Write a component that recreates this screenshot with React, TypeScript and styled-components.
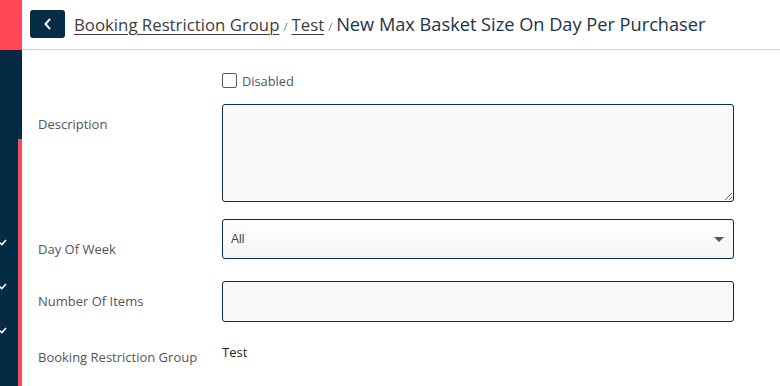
import styled, { createGlobalStyle } from 'styled-components'

const GlobalStyle = createGlobalStyle`
  html, body {
    margin: 0;
    padding: 0;
    background: #fff;
    font-family: 'Open Sans', 'Noto Sans', sans-serif;
  }
  * { box-sizing: border-box; }
`

const Shell = styled.div`
  display: flex;
  height: 386px;
  width: 780px;
  overflow: hidden;
`

const Sidebar = styled.aside`
  width: 22px;
  flex-shrink: 0;
  display: flex;
  flex-direction: column;
  background: #052a44;
`

const SideTop = styled.div`
  height: 50px;
  background: #ff4757;
`

const SideGap = styled.div`
  height: 89px;
`

const SideNav = styled.nav`
  flex: 1;
  border-right: 4px solid #ff4757;
  display: flex;
  flex-direction: column;
  padding-top: 97px;
  gap: 33px;
`

const Tick = styled.svg`
  width: 8px;
  height: 11px;
  margin-left: -1px;
`

const Main = styled.main`
  flex: 1;
  display: flex;
  flex-direction: column;
`

const Header = styled.header`
  height: 50px;
  border-bottom: 1px solid #cfcfcf;
  display: flex;
  align-items: center;
  padding: 0 0 2px 8px;
  gap: 9px;
`

const BackButton = styled.button`
  width: 35px;
  height: 28px;
  border: none;
  border-radius: 3px;
  background: #062b45;
  display: flex;
  align-items: center;
  justify-content: center;
  padding: 0;
`

const Crumbs = styled.div`
  font-size: 16.8px;
  color: #1e3347;
  display: flex;
  align-items: baseline;
  white-space: nowrap;
`

const CrumbLink = styled.a`
  color: #3d3d3d;
  text-decoration: underline;
  text-underline-offset: 3px;
  text-decoration-thickness: 1px;
`

const CrumbCurrent = styled.span`
  font-size: 18.2px;
  color: #1e3347;
`

const Sep = styled.span`
  font-size: 11px;
  color: #777;
  margin: 0 4px;
`

const Form = styled.div`
  padding: 22px 0 0 16px;
  display: flex;
  flex-direction: column;
`

const Row = styled.div<{ $gap: number }>`
  display: grid;
  grid-template-columns: 184px 512px;
  align-items: start;
  margin-bottom: ${p => p.$gap}px;
`

const Label = styled.label<{ $top: number }>`
  font-size: 13px;
  color: #555;
  padding-top: ${p => p.$top}px;
  line-height: 18px;
`

const CheckWrap = styled.label`
  display: flex;
  align-items: center;
  gap: 5px;
  font-size: 12.8px;
  color: #555;
  line-height: 18px;
`

const CheckBox = styled.span`
  width: 15px;
  height: 15px;
  border: 1px solid #5a5a5a;
  border-radius: 2px;
  background: #fff;
  margin-top: -2px;
`

const TextArea = styled.textarea`
  width: 512px;
  height: 98px;
  border: 1px solid #0b2d45;
  border-radius: 3px;
  background: #f9f9f9;
  resize: vertical;
  font: inherit;
  display: block;
`

const Select = styled.div`
  width: 512px;
  height: 40px;
  border: 1px solid #0b2d45;
  border-radius: 3px;
  background: linear-gradient(#ffffff, #f4f4f4);
  display: flex;
  align-items: center;
  justify-content: space-between;
  padding: 0 9px 0 8px;
  font-family: 'Liberation Sans', Arial, sans-serif;
  font-size: 12px;
  color: #444;
`

const Caret = styled.span`
  width: 0;
  height: 0;
  border-left: 5px solid transparent;
  border-right: 5px solid transparent;
  border-top: 5px solid #555;
`

const Input = styled.input`
  width: 512px;
  height: 41px;
  border: 1px solid #0b2d45;
  border-radius: 3px;
  background: #f9f9f9;
  display: block;
`

const Value = styled.div`
  font-size: 13px;
  color: #222;
  padding-top: 9px;
  line-height: 18px;
`

const TickIcon = () => (
  <Tick viewBox="0 0 8 11">
    <path d="M0.5 6.5 L2.8 8.6 L7 4" stroke="#fff" strokeWidth="1.6" fill="none" />
  </Tick>
)

export default function App() {
  return (
    <>
      <GlobalStyle />
      <Shell>
        <Sidebar>
          <SideTop />
          <SideGap />
          <SideNav>
            <TickIcon />
            <TickIcon />
            <TickIcon />
          </SideNav>
        </Sidebar>
        <Main>
          <Header>
            <BackButton aria-label="Back">
              <svg width="10" height="14" viewBox="0 0 10 14">
                <path d="M7 2 L2.5 7 L7 12" stroke="#fff" strokeWidth="2" fill="none" />
              </svg>
            </BackButton>
            <Crumbs>
              <CrumbLink>Booking Restriction Group</CrumbLink>
              <Sep>/</Sep>
              <CrumbLink>Test</CrumbLink>
              <Sep>/</Sep>
              <CrumbCurrent>New Max Basket Size On Day Per Purchaser</CrumbCurrent>
            </Crumbs>
          </Header>
          <Form>
            <Row $gap={14}>
              <span />
              <CheckWrap>
                <CheckBox />
                Disabled
              </CheckWrap>
            </Row>
            <Row $gap={17}>
              <Label $top={11}>Description</Label>
              <TextArea />
            </Row>
            <Row $gap={22}>
              <Label $top={21}>Day Of Week</Label>
              <Select>
                <span>All</span>
                <Caret />
              </Select>
            </Row>
            <Row $gap={12}>
              <Label $top={11}>Number Of Items</Label>
              <Input />
            </Row>
            <Row $gap={0}>
              <Label $top={14}>Booking Restriction Group</Label>
              <Value>Test</Value>
            </Row>
          </Form>
        </Main>
      </Shell>
    </>
  )
}
